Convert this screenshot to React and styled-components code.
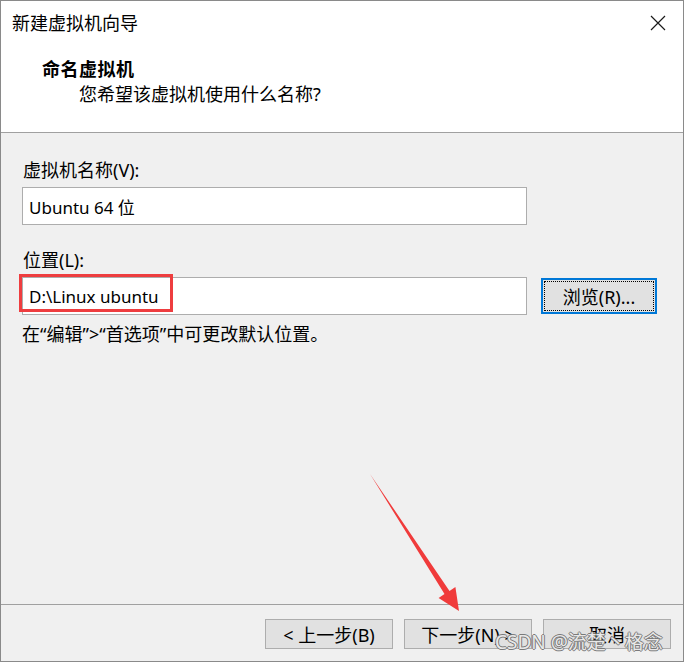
import React from "react";
import styled, { createGlobalStyle } from "styled-components";

const GlobalStyle = createGlobalStyle`
  html, body {
    margin: 0;
    padding: 0;
    background: #ffffff;
  }
  body {
    font-family: "Noto Sans", "Noto Sans CJK SC", sans-serif;
    color: #000;
  }
`;

const Window = styled.div`
  position: relative;
  width: 684px;
  height: 662px;
  box-sizing: border-box;
  border: 1px solid #8a8a8a;
  display: flex;
  flex-direction: column;
  background: #f0f0f0;
  overflow: hidden;
`;

const Header = styled.div`
  height: 131px;
  background: #ffffff;
  border-bottom: 1px solid #a0a0a0;
  box-sizing: content-box;
`;

const TitleBar = styled.div`
  display: flex;
  justify-content: space-between;
  align-items: flex-start;
  padding: 12px 17px 0 11px;
`;

const Title = styled.div`
  font-size: 18px;
  line-height: 20px;
`;

const CloseIcon = styled.svg`
  width: 16px;
  height: 16px;
  margin-top: 2px;
`;

const Heading = styled.div`
  margin: 26px 0 0 41px;
  font-size: 18px;
  line-height: 20px;
  font-weight: 700;
  letter-spacing: 0.5px;
`;

const Subheading = styled.div`
  margin: 5px 0 0 78px;
  font-size: 18px;
  line-height: 20px;
`;

const Body = styled.div`
  flex: 1;
  padding: 27px 0 0 21px;
  display: flex;
  flex-direction: column;
`;

const Label = styled.div`
  font-size: 18px;
  line-height: 20px;
  padding-left: 1px;
  margin-top: ${(p) => p.$top || 0}px;
`;

const FieldRow = styled.div`
  display: flex;
  align-items: center;
  gap: 14px;
  margin-top: 7px;
`;

const FieldWrap = styled.div`
  position: relative;
  width: 505px;
`;

const TextBox = styled.input`
  display: block;
  width: 100%;
  height: 38px;
  box-sizing: border-box;
  border: 1px solid #adadad;
  background: #ffffff;
  padding: 0 6px;
  font-family: inherit;
  font-size: 17px;
  color: #000;
  outline: none;
`;

const RedMark = styled.div`
  position: absolute;
  left: -3px;
  top: -3px;
  width: 154px;
  height: 38px;
  box-sizing: border-box;
  border: 3px solid #ee3d3f;
  pointer-events: none;
`;

const BrowseButton = styled.button`
  width: 116px;
  height: 36px;
  box-sizing: border-box;
  background: #e1e1e1;
  border: 2px solid #0078d7;
  outline: 1px dotted #000;
  outline-offset: -4px;
  font-family: inherit;
  font-size: 18px;
  color: #000;
  padding: 0;
`;

const Hint = styled.div`
  margin-top: 9px;
  font-size: 18px;
  line-height: 20px;
`;

const Footer = styled.div`
  border-top: 1px solid #a0a0a0;
  padding: 14px 12px 12px 0;
  display: flex;
  justify-content: flex-end;
  gap: 11px;
`;

const NavButton = styled.button`
  width: 128px;
  height: 30px;
  box-sizing: border-box;
  background: #e1e1e1;
  border: 1px solid #adadad;
  font-family: inherit;
  font-size: 18px;
  color: #000;
  padding: 0;
`;

const ArrowLayer = styled.svg`
  position: absolute;
  left: -1px;
  top: -1px;
  width: 684px;
  height: 663px;
  pointer-events: none;
`;

const Watermark = styled.div`
  position: absolute;
  left: 494px;
  top: 629px;
  font-size: 19px;
  line-height: 24px;
  color: rgba(248, 248, 248, 0.9);
  text-shadow: 1px 0 0 #7a7a7a, -1px 0 0 #7a7a7a, 0 1px 0 #7a7a7a, 0 -1px 0 #7a7a7a;
  white-space: nowrap;
  pointer-events: none;
`;

const App = () => {
  return (
    <>
      <GlobalStyle />
      <Window>
        <Header>
          <TitleBar>
            <Title>新建虚拟机向导</Title>
            <CloseIcon viewBox="0 0 16 16">
              <path d="M1 1 L15 15 M15 1 L1 15" stroke="#1a1a1a" strokeWidth="1.2" fill="none" />
            </CloseIcon>
          </TitleBar>
          <Heading>命名虚拟机</Heading>
          <Subheading>您希望该虚拟机使用什么名称?</Subheading>
        </Header>
        <Body>
          <Label>虚拟机名称(V):</Label>
          <FieldRow>
            <FieldWrap>
              <TextBox defaultValue="Ubuntu 64 位" readOnly />
            </FieldWrap>
          </FieldRow>
          <Label $top={25}>位置(L):</Label>
          <FieldRow>
            <FieldWrap>
              <TextBox defaultValue="D:\Linux ubuntu" readOnly />
              <RedMark />
            </FieldWrap>
            <BrowseButton>浏览(R)...</BrowseButton>
          </FieldRow>
          <Hint>在“编辑”&gt;“首选项”中可更改默认位置。</Hint>
        </Body>
        <Footer>
          <NavButton>&lt; 上一步(B)</NavButton>
          <NavButton>下一步(N) &gt;</NavButton>
          <NavButton>取消</NavButton>
        </Footer>
        <ArrowLayer viewBox="0 0 684 663">
          <polygon
            points="370,474 449.5,590.9 455.4,587 459,611 438.6,598 444.5,594.1"
            fill="#f03b3b"
          />
        </ArrowLayer>
        <Watermark>CSDN @流楚丶格念</Watermark>
      </Window>
    </>
  );
};

export default App;
